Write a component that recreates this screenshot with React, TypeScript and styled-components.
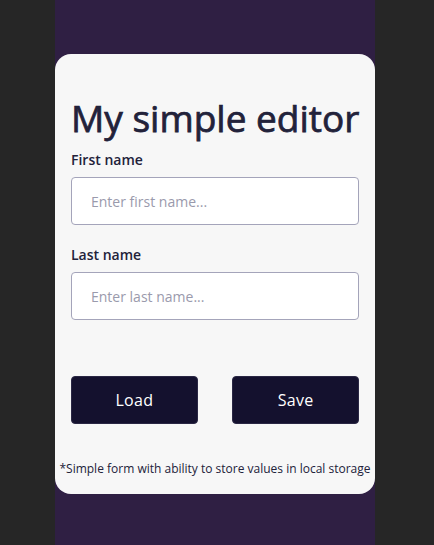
import React from "react";
import styled, { createGlobalStyle } from "styled-components";

const Global = createGlobalStyle`
  html, body { margin: 0; padding: 0; background: #262626; }
  body { font-family: "Open Sans", "Noto Sans", sans-serif; }
  * { box-sizing: border-box; }
`;

const Page = styled.div`
  padding-right: 4px;
`;

const Column = styled.div`
  width: 320px;
  margin: 0 auto;
  min-height: 100vh;
  background: #2f1f43;
  padding-top: 54px;
`;

const Card = styled.div`
  background: #f7f7f7;
  border-radius: 16px;
  padding: 42px 16px 17px;
  display: flex;
  flex-direction: column;
`;

const Title = styled.h1`
  margin: 0;
  font-size: 37px;
  line-height: 44px;
  font-weight: 500;
  color: #22223a;
  text-align: center;
  white-space: nowrap;
  -webkit-text-stroke: 0.75px #22223a;
`;

const Field = styled.div<{ $top: number }>`
  display: flex;
  flex-direction: column;
  margin-top: ${(p) => p.$top}px;
`;

const Label = styled.label`
  font-size: 14px;
  line-height: 20px;
  font-weight: 600;
  color: #22223a;
  margin-bottom: 7px;
`;

const Input = styled.input`
  height: 48px;
  width: 100%;
  border: 1px solid #a4a4ba;
  border-radius: 4px;
  background: #ffffff;
  padding: 0 19px;
  font-family: inherit;
  font-size: 14px;
  color: #22223a;
  outline: none;
  &::placeholder { color: #9a9aac; }
`;

const Buttons = styled.div`
  display: flex;
  justify-content: space-between;
  margin-top: 56px;
`;

const Button = styled.button`
  width: 44%;
  height: 48px;
  background: #14112e;
  color: #ffffff;
  border: 1px solid #2a2744;
  border-radius: 4px;
  font-family: inherit;
  font-size: 16px;
  letter-spacing: 0.3px;
  cursor: pointer;
`;

const Note = styled.p`
  margin: 37px -12px 0;
  font-size: 12px;
  line-height: 16px;
  color: #22223a;
  text-align: center;
  white-space: nowrap;
`;

export default function App() {
  return (
    <>
      <Global />
      <Page>
        <Column>
          <Card>
            <Title>My simple editor</Title>
            <Field $top={10}>
              <Label>First name</Label>
              <Input placeholder="Enter first name..." />
            </Field>
            <Field $top={20}>
              <Label>Last name</Label>
              <Input placeholder="Enter last name..." />
            </Field>
            <Buttons>
              <Button>Load</Button>
              <Button>Save</Button>
            </Buttons>
            <Note>*Simple form with ability to store values in local storage</Note>
          </Card>
        </Column>
      </Page>
    </>
  );
}
